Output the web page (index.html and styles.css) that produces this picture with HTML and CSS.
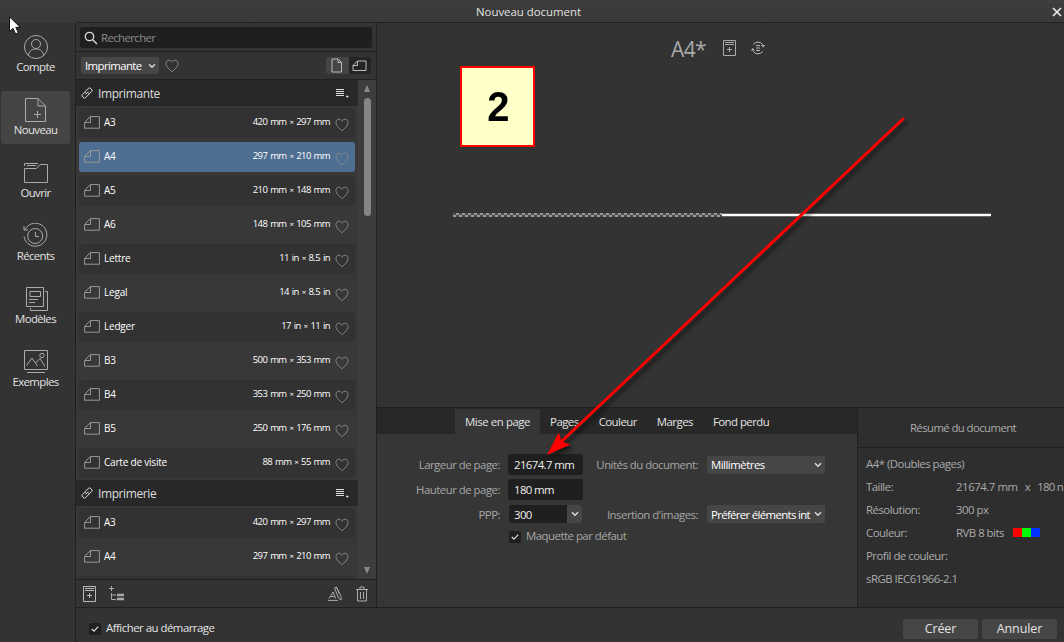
FILE: index.html
```html
<!DOCTYPE html>
<html lang="fr">
<head>
<meta charset="utf-8">
<title>Nouveau document</title>
<link rel="stylesheet" href="styles.css">
</head>
<body>
<svg class="defs" width="0" height="0">
  <symbol id="sheet" viewBox="0 0 16 13"><path d="M.6 6.5 6.2.6H15.4V12.2H.6Z M6.5.8V6.5H.8" /></symbol>
  <symbol id="heart" viewBox="0 0 14 14"><path d="M7 12.8C4.5 10.3 1 8 1 4.6 1 2.500 2.200 1.200 4 1.200 5.500 1.200 6.500 2.100 7 3.300 7.500 2.100 8.500 1.200 10 1.200 11.800 1.200 13 2.500 13 4.600 13 8 9.500 10.300 7 12.800Z"/></symbol>
  <symbol id="chev" viewBox="0 0 8 6"><path d="M1 1.200 4 4.200 7 1.200"/></symbol>
  <symbol id="link" viewBox="0 0 12 12"><path d="M4.400 5.600 3.800 5 7.600 1.200Q8.800.300 10.200 1.800 11.700 3.200 10.800 4.400L8.400 6.800 7.300 5.700M7.600 6.400 8.200 7 4.400 10.800Q3.200 11.700 1.800 10.200.300 8.800 1.200 7.600L3.600 5.200 4.700 6.300M4.600 7.400 7.400 4.600"/></symbol>
  <symbol id="menu" viewBox="0 0 13 10"><path d="M0 1.500H8M0 3.500H8M0 5.500H8M0 7.500H8"/><path d="M10 8.500H12.500" stroke-width="1.500"/></symbol>
  <symbol id="tick" viewBox="0 0 12 12"><path d="M2.800 6 5 8.200 9.200 3.700"/></symbol>
  <symbol id="addpage" viewBox="0 0 13 16"><path d="M.5.500H12.500V15.500H.5ZM2 2.500H11M2 4.500H11M6.500 7V12M4 9.500H9"/></symbol>
</svg>
<div class="window">
  <header class="titlebar"><span class="title">Nouveau document</span><svg class="close" viewBox="0 0 10 10"><path d="M1 1 9 9M9 1 1 9"/></svg></header>
  <nav class="sidebar">
    <div class="nav"><svg viewBox="0 0 26 26"><circle cx="13" cy="13" r="11.500"/><circle cx="13" cy="10" r="4.500"/><path d="M5.500 21C6.500 16.800 9 15 13 15S19.500 16.800 20.500 21"/></svg><span>Compte</span></div>
    <div class="nav active"><svg viewBox="0 0 26 26"><path d="M2.500 1.500H15L22.500 9V24.500H2.500ZM15 1.500V9H22.500M14.500 14V21M11 17.500H18"/></svg><span>Nouveau</span></div>
    <div class="nav"><svg viewBox="0 0 26 26"><path d="M1.500 8.500H13.500L17 4.500H24.500V22.500H1.500ZM1.500 6V3.500H15M4 5.500H13"/></svg><span>Ouvrir</span></div>
    <div class="nav"><svg viewBox="0 0 26 26"><path d="M2 6.700A11.500 11.500 0 1 1 1 13.500M1 3V7H5"/><circle cx="12.200" cy="13" r="7.500"/><path d="M12.500 9V13.500H16"/></svg><span>Récents</span></div>
    <div class="nav"><svg viewBox="0 0 26 26"><path d="M3.500 1.500H20.500V20.500H3.500ZM7 5.500H17.500V10.500H7ZM6 13.500H15M6 16.500H12M22 5.500H24.500V24.500H7.500V22"/></svg><span>Modèles</span></div>
    <div class="nav"><svg viewBox="0 0 26 26"><path d="M1.500 1.500H24.500V20.500H1.500ZM3.500 16.500 9 9 14.500 17M12.500 14 17 9.500 22 17.500M4 23.500H22"/><circle cx="19" cy="6.500" r="2.200"/></svg><span>Exemples</span></div>
  </nav>
  <aside class="presets">
    <div class="searchbar"><div class="search"><svg viewBox="0 0 14 14"><circle cx="5.500" cy="5.500" r="4.200"/><path d="M8.700 8.700 13 13"/></svg><span>Rechercher</span></div></div>
    <div class="filter">
      <div class="category"><span>Imprimante</span><svg class="chev"><use href="#chev"/></svg></div>
      <svg class="heart"><use href="#heart"/></svg>
      <div class="orient"><span class="on"><svg viewBox="0 0 12 15"><path d="M1 1H7L10.500 4.500V14H1ZM7 1V4.500H10.500"/></svg></span><span><svg class="land" viewBox="0 0 15 12"><path d="M1 5.500 5.500 1H14V10.500H1ZM5.500 1V5.500H1"/></svg></span></div>
    </div>
    <div class="listwrap">
      <div class="list">
        <div class="group"><svg class="link"><use href="#link"/></svg><span>Imprimante</span><svg class="menu"><use href="#menu"/></svg></div>
        <div class="row"><svg class="sheet"><use href="#sheet"/></svg><span>A3</span><b>420 mm <small>×</small> 297 mm</b><svg class="heart"><use href="#heart"/></svg></div>
        <div class="row selected"><svg class="sheet"><use href="#sheet"/></svg><span>A4</span><b>297 mm <small>×</small> 210 mm</b><svg class="heart"><use href="#heart"/></svg></div>
        <div class="row"><svg class="sheet"><use href="#sheet"/></svg><span>A5</span><b>210 mm <small>×</small> 148 mm</b><svg class="heart"><use href="#heart"/></svg></div>
        <div class="row alt"><svg class="sheet"><use href="#sheet"/></svg><span>A6</span><b>148 mm <small>×</small> 105 mm</b><svg class="heart"><use href="#heart"/></svg></div>
        <div class="row"><svg class="sheet"><use href="#sheet"/></svg><span>Lettre</span><b>11 in <small>×</small> 8.5 in</b><svg class="heart"><use href="#heart"/></svg></div>
        <div class="row alt"><svg class="sheet"><use href="#sheet"/></svg><span>Legal</span><b>14 in <small>×</small> 8.5 in</b><svg class="heart"><use href="#heart"/></svg></div>
        <div class="row"><svg class="sheet"><use href="#sheet"/></svg><span>Ledger</span><b>17 in <small>×</small> 11 in</b><svg class="heart"><use href="#heart"/></svg></div>
        <div class="row alt"><svg class="sheet"><use href="#sheet"/></svg><span>B3</span><b>500 mm <small>×</small> 353 mm</b><svg class="heart"><use href="#heart"/></svg></div>
        <div class="row"><svg class="sheet"><use href="#sheet"/></svg><span>B4</span><b>353 mm <small>×</small> 250 mm</b><svg class="heart"><use href="#heart"/></svg></div>
        <div class="row alt"><svg class="sheet"><use href="#sheet"/></svg><span>B5</span><b>250 mm <small>×</small> 176 mm</b><svg class="heart"><use href="#heart"/></svg></div>
        <div class="row"><svg class="sheet"><use href="#sheet"/></svg><span>Carte de visite</span><b>88 mm <small>×</small> 55 mm</b><svg class="heart"><use href="#heart"/></svg></div>
        <div class="group"><svg class="link"><use href="#link"/></svg><span>Imprimerie</span><svg class="menu"><use href="#menu"/></svg></div>
        <div class="row"><svg class="sheet"><use href="#sheet"/></svg><span>A3</span><b>420 mm <small>×</small> 297 mm</b><svg class="heart"><use href="#heart"/></svg></div>
        <div class="row alt"><svg class="sheet"><use href="#sheet"/></svg><span>A4</span><b>297 mm <small>×</small> 210 mm</b><svg class="heart"><use href="#heart"/></svg></div>
        <div class="row"></div>
      </div>
      <div class="scroll"><i class="up"></i><i class="thumb"></i><i class="down"></i></div>
    </div>
    <div class="tools">
      <svg class="t-add"><use href="#addpage"/></svg>
      <svg class="t-tree" viewBox="0 0 16 15"><path d="M2.500 0V5M0 2.500H5M2.500 7V13.500H7M2.500 9H7"/><path d="M8 9H15M8 13H15" stroke-width="2.600"/></svg>
      <svg class="t-edit" viewBox="0 0 14 15"><path d="M0 14.400H10M1 12.500 5.200 6 7.500 12.500M2.500 10.500H6.500M6.500 2 8.500 1 13 10.500V14L10.500 12ZM8.300 1.200 11.500 8"/></svg>
      <svg class="t-bin" viewBox="0 0 12 16"><path d="M0 3.500H12M4 3V1H8V3M1.500 4V15H10.500V4M4.500 6V13M7.500 6V13"/></svg>
    </div>
  </aside>
  <main class="main">
    <section class="preview">
      <div class="heading"><span class="name">A4*</span><svg class="p-add"><use href="#addpage"/></svg><svg class="p-sync" viewBox="0 0 14 14"><path d="M2.300 3.500A5.800 5.800 0 0 1 11.700 3.500M11.700 10.500A5.800 5.800 0 0 1 2.300 10.500M5 4.500H9M5 7H9M5 9.500H9"/><path class="solid" d="M10 4H14L12.400 6.500ZM0 9.500 1.600 7 4 9.500Z"/></svg></div>
      <div class="spread"><i class="checks"></i><i class="paper"></i></div>
    </section>
    <section class="settings">
      <div class="tabs"><span class="tab on">Mise en page</span><span class="tab">Pages</span><span class="tab">Couleur</span><span class="tab">Marges</span><span class="tab">Fond perdu</span></div>
      <div class="form">
        <label>Largeur de page:</label><div class="input">21674.7 mm</div><label>Unités du document:</label><div class="select"><span>Millimètres</span><svg class="chev"><use href="#chev"/></svg></div>
        <label>Hauteur de page:</label><div class="input">180 mm</div><i></i><i></i>
        <label>PPP:</label><div class="combo"><span>300</span><em><svg class="chev"><use href="#chev"/></svg></em></div><label>Insertion d'images:</label><div class="select"><span class="clip">Préférer éléments int</span><svg class="chev"><use href="#chev"/></svg></div>
      </div>
      <div class="check default"><i><svg><use href="#tick"/></svg></i><span>Maquette par défaut</span></div>
    </section>
    <section class="summary">
      <h2>Résumé du document</h2>
      <dl>
        <dt class="wide">A4* (Doubles pages)</dt>
        <dt>Taille:</dt><dd class="size"><span>21674.7 mm</span><span>x</span><span>180 n</span></dd>
        <dt>Résolution:</dt><dd>300 px</dd>
        <dt>Couleur:</dt><dd>RVB 8 bits<span class="rgb"><i class="r"></i><i class="g"></i><i class="b"></i></span></dd>
        <dt class="wide">Profil de couleur:</dt>
        <dt class="wide">sRGB IEC61966-2.1</dt>
      </dl>
    </section>
  </main>
  <footer class="footer">
    <div class="check"><i><svg><use href="#tick"/></svg></i><span>Afficher au démarrage</span></div>
    <div class="buttons"><span>Créer</span><span>Annuler</span></div>
  </footer>
</div>
<div class="callout"><span>2</span></div>
<svg class="arrow" viewBox="0 0 1064 642"><g><path class="shaft" d="M903 119 562 441"/><path class="head" d="M547 455 558.800 432.500 561.500 441.500 570.500 444.500Z"/></g></svg>
<svg class="cursor" viewBox="0 0 12 19"><path d="M.5.800V15.500L4 12.300 6.600 18 9.300 16.700 6.800 11.300H11.300Z"/></svg>
</body>
</html>
```
FILE: styles.css
```css
* { box-sizing: border-box; }
body { margin: 0; width: 1064px; height: 642px; overflow: hidden; background: #333; color: #e2e2e2; font: 11.400px/16px "Open Sans", "Noto Sans", sans-serif; letter-spacing: -.5px; }
.defs { position: absolute; }
svg { display: block; flex: none; fill: none; stroke: #aaa; stroke-width: 1; }
i, em, b { font-style: normal; font-weight: normal; display: block; }
.window { display: grid; width: 1064px; height: 642px; grid-template: 23px 585px 34px / 76px 301px 687px; }
.titlebar { grid-column: 1 / -1; background: linear-gradient(#3d3d3d, #393939); display: flex; align-items: center; justify-content: flex-end; padding-right: 2px; }
.title { flex: 1; text-align: center; padding: 1px 0 0 5px; letter-spacing: 0; }
.close { width: 10px; height: 10px; stroke: #eee; stroke-width: 1.600; }
.sidebar { grid-row: 2 / 4; border-right: 1px solid #202020; padding: 5px 5px 0 1px; display: flex; flex-direction: column; gap: 10px; background: #333; }
.nav { height: 53px; padding-top: 6px; display: flex; flex-direction: column; align-items: center; border-radius: 3px; letter-spacing: -.6px; }
.nav svg { width: 26px; height: 26px; }
.nav span { line-height: 16px; margin-top: -1px; }
.active { background: #454545; }
.presets { border: 1px solid #202020; border-left: 0; border-bottom: 0; margin-top: -1px; display: flex; flex-direction: column; }
.searchbar { height: 29px; border-bottom: 1px solid #202020; padding: 4px 4px 4px; }
.search { height: 21px; border-radius: 3px; background: #1f1f1f; display: flex; align-items: center; gap: 3px; padding-left: 4px; color: #8d8d8d; letter-spacing: -.6px; }
.search svg { width: 14px; height: 14px; stroke: #ddd; stroke-width: 1.300; }
.filter { height: 28px; border-bottom: 1px solid #202020; padding: 0 5px; display: flex; align-items: center; }
.category { width: 78px; height: 17px; background: #464646; border-radius: 2px; display: flex; align-items: center; justify-content: space-between; padding: 0 3px 0 4px; color: #fff; letter-spacing: -.6px; }
.chev { width: 8px; height: 6px; stroke: #ddd; stroke-width: 1.400; }
.filter > .heart { margin-left: 6px; }
.heart { width: 14px; height: 14px; stroke: #8a8a8a; stroke-width: .900; }
.orient { margin-left: auto; display: flex; background: #252525; border-radius: 3px; overflow: hidden; height: 17px; }
.orient span { width: 22.500px; display: grid; place-items: center; }
.orient .on { background: #454545; }
.orient svg { width: 12px; height: 15px; stroke: #bbb; }
.orient .land { width: 15px; height: 12px; }
.listwrap { display: flex; height: 499px; }
.list { width: 282px; overflow: hidden; background: #383838; display: flex; flex-direction: column; }
.group { flex: none; height: 26px; background: #282828; display: flex; align-items: center; padding: 0 9px 0 5px; font-size: 12px; letter-spacing: -.4px; color: #ddd; }
.group span { margin-left: 5px; flex: 1; padding-top: 2px; }
.link { width: 12px; height: 12px; stroke: #ddd; }
.menu { width: 13px; height: 10px; stroke: #ddd; }
.row { flex: none; height: 30px; margin: 2px 3px; background: #323232; border-radius: 3px; display: flex; align-items: center; padding: 0 6px 0 5px; font-size: 10px; letter-spacing: -.2px; color: #fff; }
.row .heart { margin: 4px 0 0 5px; }
.row span { margin-left: 4px; flex: 1; font-weight: 500; padding-bottom: 2px; }
.row b { font-weight: 500; padding-bottom: 2px; font-size: 9.500px; letter-spacing: -.6px; word-spacing: 1px; }
.row small { font-size: 8px; }
.row.alt { background: #383838; }
.row.selected { background: #4e6e92; }
.sheet { width: 16px; height: 13px; stroke: #999; margin-bottom: 1px; }
.scroll { width: 18px; background: #3d3d3d; display: flex; flex-direction: column; align-items: center; padding: 5px 0; }
.up, .down { border: 3.500px solid transparent; border-top: 0; border-bottom: 7px solid #898989; }
.down { border-bottom: 0; border-top: 7px solid #898989; margin-top: auto; }
.thumb { width: 7px; height: 118px; margin-top: 6px; border-radius: 4px; background: #858585; }
.tools { flex: 1; border-top: 1px solid #202020; display: flex; align-items: center; padding: 0 8px 1px 7px; }
.t-add { width: 13px; height: 16px; stroke: #bbb; }
.t-tree { width: 16px; height: 15px; margin-left: 13px; }
.t-edit { width: 14px; height: 15px; margin-left: auto; }
.t-bin { width: 12px; height: 16px; margin-left: 14px; }
.main { display: grid; grid-template: 385px 200px / 480px 207px; border-top: 1px solid #202020; margin-top: -1px; }
.preview { grid-column: 1 / -1; border-bottom: 1px solid #202020; }
.heading { display: flex; align-items: center; padding: 9px 0 0 294px; height: 41px; }
.name { font-size: 21px; line-height: 30px; padding-top: 2px; color: #a9a9a9; width: 52px; letter-spacing: -.6px; }
.p-add { width: 13px; height: 16px; margin-top: -1px; }
.p-sync { width: 14px; height: 14px; margin-left: 15px; stroke: #bbb; }
.solid { fill: #bbb; stroke: none; }
.spread { display: flex; margin: 149px 0 0 76px; height: 4px; align-items: center; }
.checks { width: 269px; height: 4px; background: conic-gradient(#999 25%, #4a4a4a 0 50%, #999 0 75%, #4a4a4a 0) 0 0 / 6px 4px; }
.paper { width: 269px; height: 4px; background: linear-gradient(#666 1px, #fff 1px 3px, #666 3px); }
.settings { border-right: 1px solid #202020; background: #363636; width: 481px; }
.tabs { height: 26px; background: #282828; display: flex; padding: 1px 0 0 78px; }
.tab { padding: 5px 10px 0; letter-spacing: -.53px; }
.tab.on { background: #363636; letter-spacing: -.42px; }
.form { display: grid; grid-template: 21px 21px 20px / 124px 75px 109px 119px; column-gap: 7px; row-gap: 4px; margin-top: 20px; align-items: center; }
.form label { text-align: right; color: #a6a6a6; white-space: nowrap; padding: 1px 1px 0 0; }
.input, .combo { background: #1f1f1f; border-radius: 3px; height: 21px; line-height: 22px; padding-left: 6px; color: #eee; letter-spacing: -.6px; }
.combo { height: 18px; line-height: 20px; display: flex; justify-content: space-between; margin: 0 1px; padding-left: 5px; overflow: hidden; }
.combo em { width: 15px; background: #464646; display: grid; place-items: center; }
.select { background: #464646; height: 18px; border-radius: 2px; display: flex; align-items: center; justify-content: space-between; padding: 0 3px 0 4px; color: #fff; width: 118px; margin-left: 1px; }
.select span { padding-top: 1px; }
.clip { white-space: nowrap; letter-spacing: -.66px; }
.check { display: flex; align-items: center; gap: 5px; }
.check i { width: 12px; height: 12px; border-radius: 2px; background: #1f1f1f; }
.check svg { width: 12px; height: 12px; stroke: #ddd; stroke-width: 1.200; }
.check span { margin-top: -2px; }
.default { margin: 6px 0 0 132px; color: #a6a6a6; }
.summary { background: #2e2e2e; color: #aaa; margin-left: 1px; }
h2 { margin: 0; height: 40px; border-bottom: 1px solid #202020; text-align: center; line-height: 39px; padding-left: 4px; font-size: inherit; font-weight: 400; letter-spacing: -.6px; }
dl { display: grid; grid-template-columns: 90px 104px; grid-auto-rows: 23px; margin: 4px 0 0 8px; line-height: 23px; }
dd { margin: 0; display: flex; align-items: center; white-space: nowrap; }
.size { gap: 7px; letter-spacing: -.45px; }
.size span:last-child { letter-spacing: -.7px; }
.wide { grid-column: 1 / -1; }
.rgb { display: flex; margin-left: 9px; }
.rgb i { width: 9px; height: 9px; }
.rgb .r { background: #f00; }
.rgb .g { background: #0f0; }
.rgb .b { background: #03f; }
.footer { grid-column: 2 / 4; border-top: 1px solid #202020; margin-top: -1px; padding: 7px 7px 0 13px; display: flex; align-items: center; justify-content: space-between; background: #333; }
.buttons { display: flex; gap: 4px; font-size: 12.500px; letter-spacing: -.1px; }
.buttons span { width: 75px; height: 20px; background: #464646; border-radius: 2px; text-align: center; line-height: 20px; }
.callout { position: absolute; left: 460px; top: 66px; width: 75px; height: 81px; border: 2px solid #f00; background: #ffffc8; color: #000; font: bold 43px/76px "Liberation Sans", Arial, sans-serif; text-align: center; letter-spacing: 0; padding-left: 2px; }
.callout span { display: block; transform: scaleX(.93); }
.arrow { position: absolute; left: 0; top: 0; width: 1064px; height: 642px; filter: drop-shadow(3px 3px 2px #0009); }
.shaft { stroke: #f00; stroke-width: 3; stroke-linecap: round; }
.head { fill: #f00; stroke: none; }
.cursor { position: absolute; left: 9px; top: 16px; width: 12px; height: 19px; fill: #fff; stroke: #111; }
```
